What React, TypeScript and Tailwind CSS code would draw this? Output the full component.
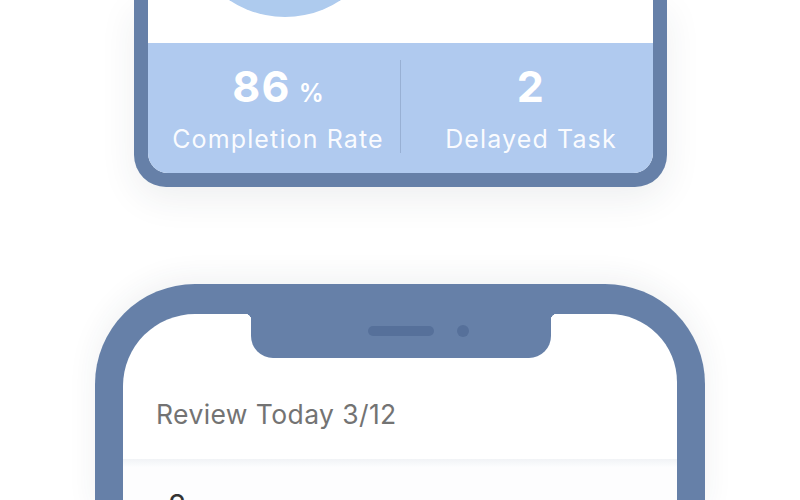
import React from "react";

function StatColumn({ value, unit, label }: { value: string; unit?: string; label: string }) {
  return (
    <div className="flex flex-1 flex-col items-center pl-[9px] pt-[22px] text-white">
      <div className="flex h-[42px] items-baseline leading-none">
        <span className="text-[43px] font-bold leading-none tracking-[0.03em]">{value}</span>
        {unit && <span className="ml-[8px] text-[25px] font-semibold leading-none">{unit}</span>}
      </div>
      <p className="mt-5 text-[25px] leading-none tracking-[0.045em] text-white/95">{label}</p>
    </div>
  );
}

export default function App() {
  return (
    <div className="h-[500px] overflow-hidden bg-white font-['Inter','Noto_Sans',sans-serif]">
      {/* stats phone, only its lower part is in view */}
      <div className="mx-auto w-[533px] rounded-b-[32px] bg-[#6680a8] px-[14px] pb-[14px] shadow-[0_12px_36px_rgba(40,50,70,0.08)]">
        <div className="overflow-hidden rounded-b-[20px] bg-white">
          <div className="h-[43px]">
            <svg width="504" height="43" viewBox="0 0 504 43">
              <circle cx="137" cy="-83" r="100" fill="#aecbee" />
            </svg>
          </div>
          <div className="flex h-[130px] bg-[#b0caef]">
            <StatColumn value="86" unit="%" label="Completion Rate" />
            <div className="mt-[17px] h-[93px] w-px bg-[#98b0d4]" />
            <StatColumn value="2" label="Delayed Task" />
          </div>
        </div>
      </div>

      {/* review phone */}
      <div className="mx-auto mt-[97px] w-[610px] rounded-t-[100px] bg-[#6680a8] px-[28px] pt-[30px] shadow-[0_-6px_30px_rgba(40,50,70,0.07)]">
        <div className="relative h-[200px] overflow-hidden rounded-tl-[72px] rounded-tr-[68px] bg-white">
          <div className="absolute left-[128px] top-0 h-[44px] w-[300px] rounded-b-[22px] bg-[#6680a8]">
            <div className="absolute left-[117px] top-[12px] h-[10px] w-[66px] rounded-full bg-[#56709a]" />
            <div className="absolute left-[206px] top-[11px] h-[12px] w-[12px] rounded-full bg-[#56709a]" />
          </div>
          <div className="absolute left-[122px] top-0 h-[6px] w-[6px] bg-[radial-gradient(circle_at_0_100%,transparent_6px,#6680a8_6.5px)]" />
          <div className="absolute left-[428px] top-0 h-[6px] w-[6px] bg-[radial-gradient(circle_at_100%_100%,transparent_6px,#6680a8_6.5px)]" />

          <div className="h-[145px] pl-[33px] pt-[87px]">
            <p className="text-[26.5px] leading-none tracking-[0.015em] text-[#737373]">Review Today 3/12</p>
          </div>
          <div className="h-[8px] bg-gradient-to-b from-[#f1f3f6] to-[#fcfdfe]" />
          <div className="bg-[#fdfdfe] pl-[45px] pt-[23px]">
            <p className="text-[30px] leading-none text-[#333333]">2</p>
          </div>
        </div>
      </div>
    </div>
  );
}
